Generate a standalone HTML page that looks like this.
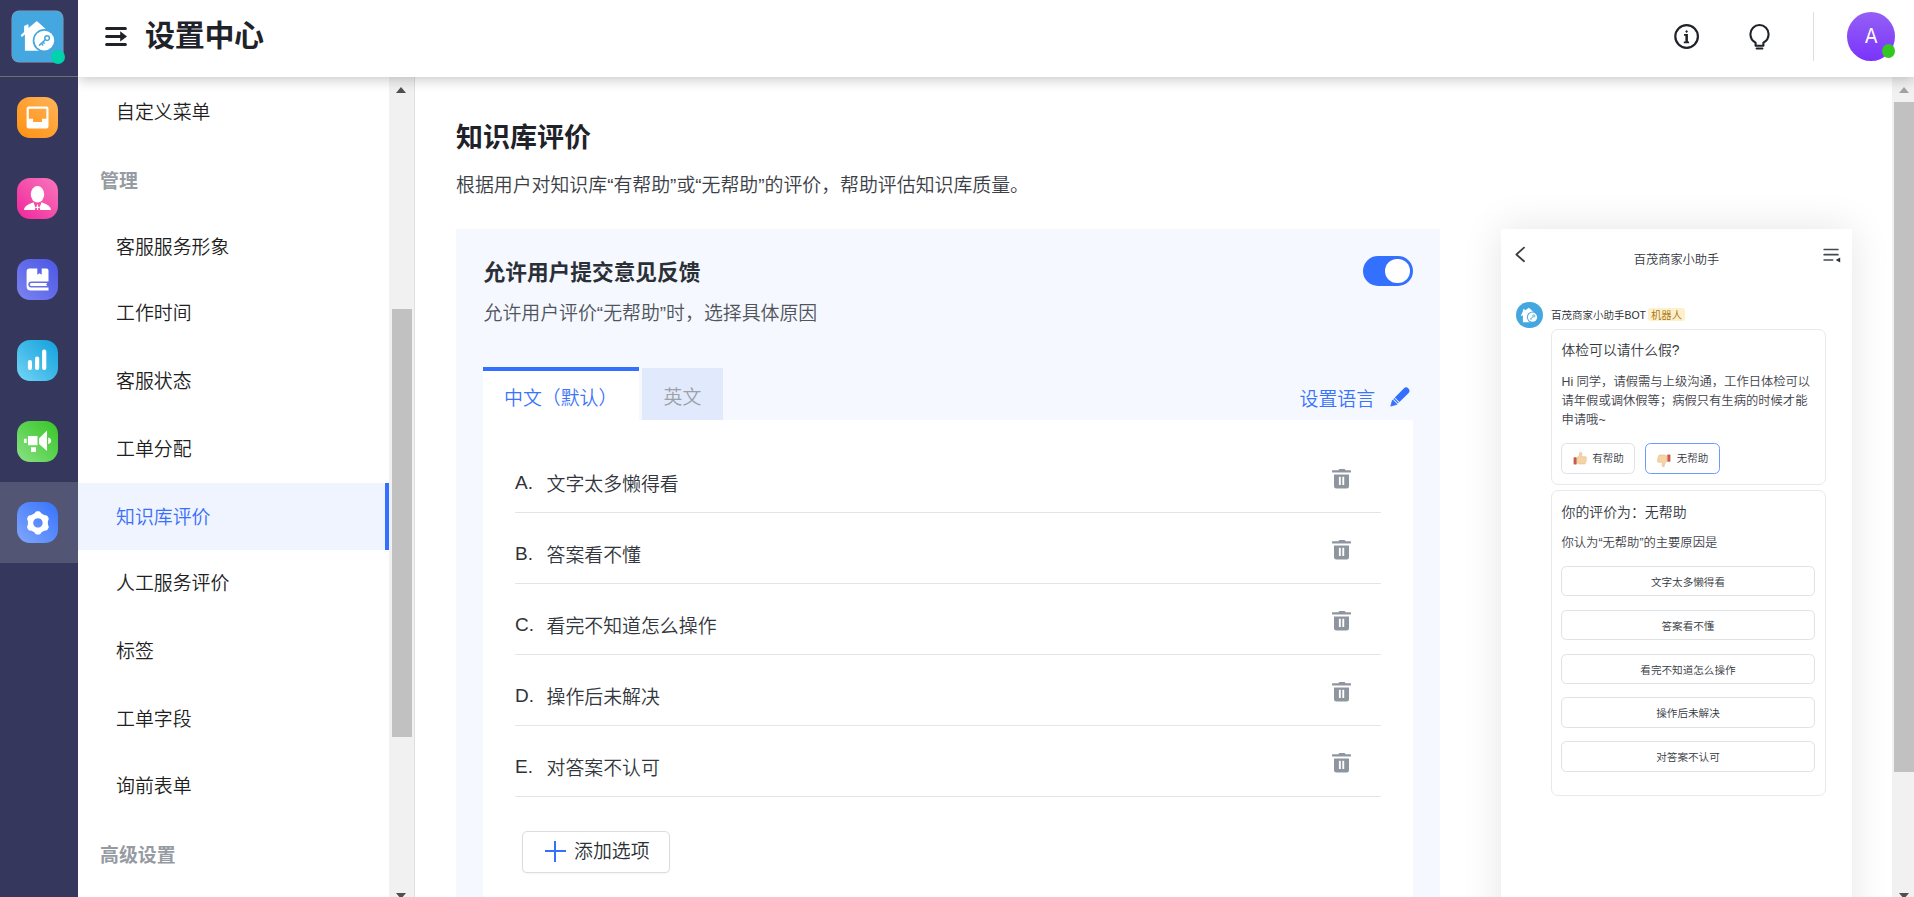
<!DOCTYPE html>
<html lang="zh-CN">
<head>
<meta charset="utf-8">
<title>设置中心</title>
<style>
*{box-sizing:border-box;margin:0;padding:0}
html,body{width:1914px;height:897px;overflow:hidden;background:#fff}
body{position:relative;font-family:"Liberation Sans","Noto Sans CJK SC DemiLight","Noto Sans CJK SC",sans-serif;font-weight:400;color:#1f2329;-webkit-font-smoothing:antialiased}
.abs{position:absolute}
/* left rail */
#rail{position:absolute;left:0;top:0;width:78px;height:897px;background:#35375c;z-index:6}
#rail .line{position:absolute;left:0;top:76px;width:78px;height:1px;background:#70706f}
#rail .act{position:absolute;left:0;top:482px;width:78px;height:81px;background:#525573}
.ico{position:absolute;left:17px;width:41px;height:41.5px;border-radius:13px}
.ico svg{position:absolute;left:0;top:0;width:41px;height:41.5px}
/* header */
#hdr{position:absolute;left:78px;top:0;width:1836px;height:77px;background:#fff;box-shadow:0 3px 12px rgba(0,0,0,.21);z-index:5}
#hdr h1{position:absolute;left:67px;top:15px;font-size:30px;line-height:42px;font-weight:700;color:#1f2329;letter-spacing:-.3px;white-space:nowrap}
/* sub menu */
#menu{position:absolute;left:78px;top:77px;width:311px;height:820px;background:#fff}
.mi{position:absolute;left:0;width:311px;height:67.3px;line-height:67.3px;padding-left:38px;font-size:18.9px;color:#1f1f1f;white-space:nowrap}
.mi.on{background:#f0f4ff;color:#3a6ffb;border-right:4px solid #3370ff}
.mh{position:absolute;left:22px;height:40px;line-height:40px;font-size:18.9px;font-weight:700;color:#969ba3;white-space:nowrap}
.sb{position:absolute;background:#f1f1f1}
.sb .th{position:absolute;background:#c1c1c1}
.tri-u{position:absolute;width:0;height:0;border-left:5.5px solid transparent;border-right:5.5px solid transparent;border-bottom:6px solid #505050}
.tri-d{position:absolute;width:0;height:0;border-left:5.5px solid transparent;border-right:5.5px solid transparent;border-top:6px solid #505050}
/* main */
#main{position:absolute;left:415px;top:77px;width:1477px;height:820px;background:#fff;overflow:hidden}

#main .t1{position:absolute;left:41px;top:41px;font-size:27px;line-height:40px;font-weight:700;color:#1f2329;white-space:nowrap}
#main .t2{position:absolute;left:41px;top:94px;font-size:18.9px;line-height:30px;color:#3b4047;white-space:nowrap}
#card{position:absolute;left:41px;top:152px;width:984px;height:700px;background:#f5f8ff}
#card .h{position:absolute;left:27.5px;top:28px;font-size:21.7px;line-height:32px;font-weight:700;color:#2b2f36;white-space:nowrap}
#card .d{position:absolute;left:27.5px;top:69.5px;font-size:18.9px;line-height:30px;color:#50545b;white-space:nowrap}
#tog{position:absolute;left:907px;top:26.5px;width:50px;height:30.5px;border-radius:16px;background:#3370ff}
#tog i{position:absolute;left:22px;top:3px;width:24.5px;height:24.5px;border-radius:50%;background:#fff}
.tab1{position:absolute;left:27px;top:138px;width:156px;height:54px;background:#fff;border-top:4px solid #3370ff;font-size:18.9px;line-height:55px;color:#3a74fb;white-space:nowrap;padding-left:21px}
.tab2{position:absolute;left:186px;top:139px;width:81px;height:55px;background:#e1e9fd;font-size:18.9px;line-height:59px;color:#9da0a6;text-align:center;white-space:nowrap}
.setl{position:absolute;left:843.5px;top:156px;font-size:18.9px;line-height:30px;color:#3a74fb;white-space:nowrap}
#panel{position:absolute;left:27px;top:191px;width:929.5px;height:520px;background:#fff}
.row{position:absolute;left:31.5px;width:866px;height:71px;border-bottom:1px solid #e3e5e9}
.row .k{position:absolute;left:.5px;top:26px;font-size:19px;line-height:30px;color:#2f3237;white-space:nowrap}
.row .v{position:absolute;left:32px;top:28px;font-size:18.9px;line-height:30px;color:#33373d;white-space:nowrap}
.row svg{position:absolute;left:816px;top:26px}
#addb{position:absolute;left:39px;top:410.5px;width:148px;height:42px;border:1px solid #dadde3;border-radius:5px;background:#fff;box-shadow:0 1px 2px rgba(0,0,0,.05)}
#addb span{position:absolute;left:51px;top:5px;font-size:18.9px;line-height:30px;color:#2b2f36;white-space:nowrap}

#pv{position:absolute;left:1086px;top:151.75px;width:351px;height:720px;background:#fff;box-shadow:0 0 38px rgba(0,0,0,.105)}
#pv .ttl{position:absolute;left:0;top:21.5px;width:351px;text-align:center;font-size:12.2px;line-height:20px;color:#33373d;white-space:nowrap}
#pv .nm{position:absolute;left:49.9px;top:76.2px;font-size:10.5px;line-height:20px;color:#2b2f36;white-space:nowrap}
#pv .tag{position:absolute;left:147.2px;top:79.6px;width:36.6px;height:12.4px;border-radius:2.5px;background:#fdf0cb;color:#a8700c;font-size:10.4px;line-height:15.4px;text-align:center;white-space:nowrap}
.pc{position:absolute;left:49.5px;width:275px;border:1px solid #e8e9eb;border-radius:7px;background:#fff}
.pc .q{position:absolute;left:10px;font-size:13.8px;line-height:20px;color:#33373d;white-space:nowrap}
.pc .b{position:absolute;left:10px;font-size:12.3px;line-height:19.05px;color:#3f434a;white-space:nowrap}
.pb{position:absolute;height:30.4px;border:1px solid #dfe1e5;border-radius:5.5px;background:#fff;font-size:10.5px;line-height:28px;color:#33373d;white-space:nowrap}
.po{position:absolute;left:9.7px;width:253.6px;height:30.6px;border:1px solid #dfe1e5;border-radius:5.5px;background:#fff;font-size:10.6px;line-height:30px;color:#33373d;text-align:center;white-space:nowrap}
#hdr h1,#main .t1,#card .h,.mh{font-family:"Liberation Sans","Noto Sans CJK SC",sans-serif}
</style>
</head>
<body>
<div id="rail">
  <div class="line"></div>
  <div class="act"></div>
  <!-- logo -->
  <div class="abs" style="left:12px;top:11px;width:51px;height:51px;border-radius:7px;background:#44a7df;box-shadow:0 0 0 .5px rgba(255,255,255,.5)">
    <svg width="52" height="52" viewBox="0 0 52 52" style="position:absolute;left:0;top:0">
      <path d="M24.2 10.5a.9.9 0 0 1 1.2 0L33.7 18l-6 4V39.8H13.4a.5.5 0 0 1-.5-.5V23.6l-2.4 1.9a.9.9 0 0 1-1.3-.2l-.2-.3a.9.9 0 0 1 .2-1.2L12.1 21.1V15l3.2-1.6a.8.8 0 0 1 1.2.7v3Z" fill="#fff"/>
      <circle cx="32.3" cy="29.6" r="11.6" fill="#44a7df"/>
      <circle cx="32.3" cy="29.6" r="9.9" fill="#fff"/>
      <circle cx="35.1" cy="27.1" r="2.3" fill="none" stroke="#44a7df" stroke-width="1.5"/>
      <path d="M33.3 28.8 27.5 34.1M29.5 32.5l1.3 1.5M31.1 31l1.1 1.2" stroke="#44a7df" stroke-width="1.5" stroke-linecap="round" fill="none"/>
    </svg>
  </div>
  <div class="abs" style="left:50.5px;top:49.5px;width:14px;height:14px;border-radius:50%;background:#00d2ad"></div>
  <!-- inbox -->
  <div class="ico" style="top:96.7px;background:linear-gradient(225deg,#ffb55c 0%,#ffa133 50%,#ff9212 100%)">
    <svg viewBox="0 0 41 41.5"><path fill-rule="evenodd" fill="#fff" d="M11.6 9.6h17.9a2 2 0 0 1 2 2v17.9a2 2 0 0 1-2 2H11.6a2 2 0 0 1-2-2V11.6a2 2 0 0 1 2-2ZM11.8 11.8v10h4.3v3.1h9V21.8h4.3v-10Z"/></svg>
  </div>
  <!-- person -->
  <div class="ico" style="top:177.7px;background:linear-gradient(225deg,#f877bd 0%,#f44fab 50%,#f2259b 100%)">
    <svg viewBox="0 0 41 41.5"><ellipse cx="20.5" cy="16.3" rx="6.7" ry="8.3" fill="#fff"/><path fill="#fff" d="M7 31.9c.6-3.6 2.6-5 9.5-7.7l1.9 5.3-.5 2.4ZM34 31.9c-.6-3.6-2.6-5-9.5-7.7l-1.9 5.3.5 2.4ZM19.9 26.6h1.2v2.1h1.3v1.2h-1.3v2h-1.2v-2h-1.3v-1.2h1.3Z"/></svg>
  </div>
  <!-- book -->
  <div class="ico" style="top:258.7px;background:linear-gradient(225deg,#4b57e6 0%,#626cea 50%,#7d85ee 100%)">
    <svg viewBox="0 0 41 41.5"><path fill-rule="evenodd" fill="#fff" d="M12.6 9.6H20.3v6.2l2.2-1.6 2.2 1.6V9.6h4.8a2 2 0 0 1 2 2V22.6H14.2a2.9 2.9 0 0 0 0 5.8H31.5v3.1H13.6a4 4 0 0 1-4-4V12.6a3 3 0 0 1 3-3ZM14.4 24H30.3l-1.1 1.5 1.1 1.5H14.4a1.5 1.5 0 0 1 0-3Z"/></svg>
  </div>
  <!-- bars -->
  <div class="ico" style="top:339.7px;background:linear-gradient(225deg,#12a1db 0%,#3fb9e8 50%,#76d6f8 100%)">
    <svg viewBox="0 0 41 41.5"><rect x="10.9" y="19.9" width="4.1" height="10.2" rx="2" fill="#fff"/><rect x="18" y="16.6" width="4.2" height="13.5" rx="2" fill="#fff"/><rect x="25.1" y="9.5" width="4.2" height="20.6" rx="2" fill="#fff"/></svg>
  </div>
  <!-- megaphone -->
  <div class="ico" style="top:420.7px;background:linear-gradient(225deg,#38c528 0%,#5dd352 50%,#8be286 100%)">
    <svg viewBox="0 0 41 41.5"><path fill="#fff" d="M7.3 17.8h2.4v4.2H7.3a.4.4 0 0 1-.4-.4v-3.4a.4.4 0 0 1 .4-.4ZM11 15h9.5v9.3H11ZM14 26.2h5v4.9h-5ZM22 17.4 30 9.6V30.1l-8-7.2ZM31.2 16.5c4 .8 4 5.8 0 6.6Z"/></svg>
  </div>
  <!-- gear -->
  <div class="ico" style="top:501.7px;background:linear-gradient(225deg,#3873fd 0%,#5a8cfc 50%,#82a7fb 100%)">
    <svg viewBox="0 0 41 41.5"><path fill-rule="evenodd" fill="#fff" d="M30.90 20.90 L30.89 20.38 L30.85 19.85 L30.88 19.32 L31.13 18.73 L31.38 18.09 L31.59 17.43 L31.73 16.74 L31.59 16.14 L31.32 15.59 L31.03 15.05 L30.71 14.53 L30.37 14.02 L29.91 13.60 L29.26 13.38 L28.57 13.23 L27.90 13.13 L27.26 13.05 L26.78 12.81 L26.35 12.51 L25.90 12.24 L25.44 11.99 L24.97 11.76 L24.52 11.47 L24.13 10.96 L23.71 10.42 L23.24 9.90 L22.71 9.44 L22.12 9.26 L21.51 9.22 L20.90 9.20 L20.29 9.22 L19.68 9.26 L19.09 9.44 L18.56 9.90 L18.09 10.42 L17.67 10.96 L17.28 11.47 L16.83 11.76 L16.36 11.99 L15.90 12.24 L15.45 12.51 L15.02 12.81 L14.54 13.05 L13.90 13.13 L13.23 13.23 L12.54 13.38 L11.89 13.60 L11.43 14.02 L11.09 14.53 L10.77 15.05 L10.48 15.59 L10.21 16.14 L10.07 16.74 L10.21 17.43 L10.42 18.09 L10.67 18.73 L10.92 19.32 L10.95 19.85 L10.91 20.38 L10.90 20.90 L10.91 21.42 L10.95 21.95 L10.92 22.48 L10.67 23.07 L10.42 23.71 L10.21 24.37 L10.07 25.06 L10.21 25.66 L10.48 26.21 L10.77 26.75 L11.09 27.27 L11.43 27.78 L11.89 28.20 L12.54 28.42 L13.23 28.57 L13.90 28.67 L14.54 28.75 L15.02 28.99 L15.45 29.29 L15.90 29.56 L16.36 29.81 L16.83 30.04 L17.28 30.33 L17.67 30.84 L18.09 31.38 L18.56 31.90 L19.09 32.36 L19.68 32.54 L20.29 32.58 L20.90 32.60 L21.51 32.58 L22.12 32.54 L22.71 32.36 L23.24 31.90 L23.71 31.38 L24.13 30.84 L24.52 30.33 L24.97 30.04 L25.44 29.81 L25.90 29.56 L26.35 29.29 L26.78 28.99 L27.26 28.75 L27.90 28.67 L28.57 28.57 L29.26 28.42 L29.91 28.20 L30.37 27.78 L30.71 27.27 L31.03 26.75 L31.32 26.21 L31.59 25.66 L31.73 25.06 L31.59 24.37 L31.38 23.71 L31.13 23.07 L30.88 22.48 L30.85 21.95 L30.89 21.42Z M20.9 16.2a4.7 4.7 0 1 0 .01 0Z"/></svg>
  </div>
</div>
<div id="hdr">
  <svg class="abs" style="left:26px;top:24px" width="24" height="26" viewBox="0 0 24 26"><path d="M2.6 4.4H21.4M2.6 12.4H17M2.6 20.6H21.4" stroke="#1f2329" stroke-width="3" stroke-linecap="round" fill="none"/><path d="M16.2 7.3 23 12.4 16.2 17.5Z" fill="#1f2329"/></svg>
  <h1>设置中心</h1>
  <svg class="abs" style="left:1594px;top:22px" width="30" height="30" viewBox="0 0 30 30"><circle cx="14.6" cy="14.5" r="11.3" fill="none" stroke="#1f2329" stroke-width="2.2"/><path d="M14.6 7.9 16 9.4 14.6 10.9 13.2 9.4Z" fill="#1f2329"/><path d="M12 12h3.9v7.5h1.2v1.8H11.8v-1.8h1.6v-5.7H12Z" fill="#1f2329"/></svg>
  <svg class="abs" style="left:1667px;top:22px" width="30" height="30" viewBox="0 0 30 30"><path d="M10.6 23.7H18.4V20.6C21.6 19.1 23.6 16 23.6 12.1A9.1 9.1 0 0 0 5.4 12.1C5.4 16 7.4 19.1 10.6 20.6Z" fill="none" stroke="#1f2329" stroke-width="2.1" stroke-linejoin="round"/><path d="M11.6 26.4H17.4" stroke="#1f2329" stroke-width="2" stroke-linecap="round"/></svg>
  <div class="abs" style="left:1735px;top:12px;width:1px;height:49px;background:#dcdde0"></div>
  <div class="abs" style="left:1769px;top:12px;width:48px;height:49px;border-radius:50%;background:linear-gradient(180deg,#9460f5 0%,#7a33fb 100%);color:#fff;font-size:21.5px;line-height:48.5px;text-align:center"><span style="display:inline-block;transform:scaleX(.86)">A</span></div>
  <div class="abs" style="left:1804px;top:44px;width:13px;height:14px;border-radius:50%;background:#34c724"></div>
</div>
<div id="menu">
  <div class="mi" style="top:1.8px">自定义菜单</div>
  <div class="mi" style="top:136.7px">客服服务形象</div>
  <div class="mi" style="top:203.4px">工作时间</div>
  <div class="mi" style="top:270.8px">客服状态</div>
  <div class="mi" style="top:338.8px">工单分配</div>
  <div class="mi on" style="top:405.7px;line-height:70px">知识库评价</div>
  <div class="mi" style="top:473px">人工服务评价</div>
  <div class="mi" style="top:541.0px">标签</div>
  <div class="mi" style="top:608.8px">工单字段</div>
  <div class="mi" style="top:675.8px">询前表单</div>
  <div class="mh" style="top:84.9px">管理</div>
  <div class="mh" style="top:759.3px">高级设置</div>
</div>
<div class="sb" style="left:389px;top:77px;width:26px;height:820px;border-right:1px solid #dddfe5"><div class="tri-u" style="left:7px;top:10px"></div><div class="th" style="left:2.5px;top:232px;width:20px;height:428px"></div><div class="tri-d" style="left:7px;top:816px"></div></div>
<div class="sb" style="left:1892px;top:77px;width:22px;height:820px;z-index:3"><div class="tri-u" style="left:7px;top:10px;border-bottom-color:#a3a3a3"></div><div class="th" style="left:2px;top:25px;width:20px;height:670px"></div><div class="tri-d" style="left:7px;top:816px"></div></div>
<div id="main">
  <div class="t1">知识库评价</div>
  <div class="t2">根据用户对知识库“有帮助”或“无帮助”的评价，帮助评估知识库质量。</div>
  <div id="pv">
    <svg class="abs" style="left:10px;top:13.6px" width="24" height="26" viewBox="0 0 24 26"><path d="M13 5.7 5.4 12.5 13 19.2" fill="none" stroke="#3a3f48" stroke-width="1.8" stroke-linecap="round" stroke-linejoin="round"/></svg>
    <div class="ttl">百茂商家小助手</div>
    <svg class="abs" style="left:318px;top:14px" width="26" height="26" viewBox="0 0 26 26"><path d="M5.2 6.5H18.9M5.2 11.7H18.9M5.2 17H13.6" fill="none" stroke="#434852" stroke-width="1.7" stroke-linecap="round"/><path d="M16.7 17 21.2 14.5V19.5Z" fill="#2b2f36"/></svg>
    <div class="abs" style="left:15px;top:72.8px;width:26.7px;height:26.7px;border-radius:50%;background:#44a7df">
      <svg width="26.7" height="26.7" viewBox="0 0 52 52" style="position:absolute;left:0;top:0"><g transform="translate(1.5 1.5) scale(.94)"><path d="M12.7 17.5V14.6l2.2-1.6 2 1.5v1.6L24.4 10.6a1 1 0 0 1 1.3 0L36 20.3l-8 3.5V40.2H13.4a.7.7 0 0 1-.7-.7V26l-2.2 1.4a.9.9 0 0 1-1.2-.3l-.3-.5a.9.9 0 0 1 .2-1.2Z" fill="#fff"/><circle cx="32.6" cy="29.9" r="11.6" fill="#44a7df"/><circle cx="32.6" cy="29.9" r="9.6" fill="#fff"/><circle cx="35.4" cy="27.3" r="2.3" fill="none" stroke="#44a7df" stroke-width="1.7"/><path d="M33.6 29 27.6 34.4M29.6 32.8l1.3 1.5" stroke="#44a7df" stroke-width="1.7" stroke-linecap="round" fill="none"/></g></svg>
    </div>
    <div class="nm">百茂商家小助手BOT</div>
    <div class="tag">机器人</div>
    <div class="pc" style="top:100.4px;height:156px">
      <div class="q" style="top:11.3px">体检可以请什么假?</div>
      <div class="b" style="top:43px">Hi 同学，请假需与上级沟通，工作日体检可以<br>请年假或调休假等；病假只有生病的时候才能<br>申请哦~</div>
      <div class="pb" style="left:9.8px;top:113.2px;width:73.5px"><svg class="abs" style="left:11px;top:6.5px" width="16" height="16" viewBox="0 0 16 16"><rect x=".6" y="6.2" width="3.1" height="7.2" rx=".6" fill="#c85a4c"/><path d="M4.2 6.4C6 5.6 6.6 3.7 6.7 1.8c.1-.9 2.1-.7 2.2 1 0 1.1-.3 2-.6 2.9h4.1c1.3 0 1.6 1.6.6 2 .8.5.6 1.7-.2 1.9.6.6.3 1.6-.5 1.8.4.7 0 1.6-.9 1.6H7.2c-1.2 0-2-.4-3-.9Z" fill="#f6d3a5" stroke="#e3b27a" stroke-width=".5"/></svg><span class="abs" style="left:30px;top:0">有帮助</span></div>
      <div class="pb" style="left:93.8px;top:113.2px;width:74.8px;border-color:#6f98ff"><svg class="abs" style="left:9px;top:8.5px" width="16" height="16" viewBox="0 0 16 16"><g transform="translate(16 15) scale(-1 -1)"><rect x=".6" y="6.2" width="3.1" height="7.2" rx=".6" fill="#c85a4c"/><path d="M4.2 6.4C6 5.6 6.6 3.7 6.7 1.8c.1-.9 2.1-.7 2.2 1 0 1.1-.3 2-.6 2.9h4.1c1.3 0 1.6 1.6.6 2 .8.5.6 1.7-.2 1.9.6.6.3 1.6-.5 1.8.4.7 0 1.6-.9 1.6H7.2c-1.2 0-2-.4-3-.9Z" fill="#f6d3a5" stroke="#e3b27a" stroke-width=".5"/></g></svg><span class="abs" style="left:30.5px;top:0">无帮助</span></div>
    </div>
    <div class="pc" style="top:261px;height:306.5px">
      <div class="q" style="top:11.1px;font-size:13.9px">你的评价为：无帮助</div>
      <div class="b" style="top:43px">你认为“无帮助”的主要原因是</div>
      <div class="po" style="top:74.85px">文字太多懒得看</div>
      <div class="po" style="top:118.80px">答案看不懂</div>
      <div class="po" style="top:162.75px">看完不知道怎么操作</div>
      <div class="po" style="top:206.70px">操作后未解决</div>
      <div class="po" style="top:250.65px">对答案不认可</div>
    </div>
  </div>
  <div id="card">
    <div class="h">允许用户提交意见反馈</div>
    <div class="d">允许用户评价“无帮助”时，选择具体原因</div>
    <div id="tog"><i></i></div>
    <div class="tab1">中文（默认）</div>
    <div class="tab2">英文</div>
    <div class="setl">设置语言</div>
    <svg class="abs" style="left:934px;top:158px" width="20" height="20" viewBox="0 0 20 20"><g transform="translate(.6 19.3) rotate(-45)" fill="#3370ff"><path d="M.3 0 5.9-3.1V3.1Z" stroke="#3370ff" stroke-width=".8" stroke-linejoin="round"/><rect x="7.1" y="-3.3" width="1.3" height="6.6"/><path d="M9.3-3.3H21.9a3.3 3.3 0 0 1 0 6.6H9.3Z"/></g></svg>
    <div id="panel">
      <div class="row" style="top:22px"><span class="k">A.</span><span class="v">文字太多懒得看</span><svg width="22" height="22" viewBox="0 0 22 22"><path fill="#8f959e" d="M7.5 2.3A1.5 1.5 0 0 1 9 .9h4a1.5 1.5 0 0 1 1.5 1.4H19.6a.4.4 0 0 1 .4.4V4.1a.4.4 0 0 1-.4.4H1.4A.4.4 0 0 1 1 4.1V2.7a.4.4 0 0 1 .4-.4ZM3 6.5H18V18a2.5 2.5 0 0 1-2.5 2.5H5.5A2.5 2.5 0 0 1 3 18Z"/><rect x="7.9" y="8.8" width="1.9" height="8.2" fill="#fff"/><rect x="11.3" y="8.8" width="1.9" height="8.2" fill="#fff"/></svg></div>
      <div class="row" style="top:93px"><span class="k">B.</span><span class="v">答案看不懂</span><svg width="22" height="22" viewBox="0 0 22 22"><path fill="#8f959e" d="M7.5 2.3A1.5 1.5 0 0 1 9 .9h4a1.5 1.5 0 0 1 1.5 1.4H19.6a.4.4 0 0 1 .4.4V4.1a.4.4 0 0 1-.4.4H1.4A.4.4 0 0 1 1 4.1V2.7a.4.4 0 0 1 .4-.4ZM3 6.5H18V18a2.5 2.5 0 0 1-2.5 2.5H5.5A2.5 2.5 0 0 1 3 18Z"/><rect x="7.9" y="8.8" width="1.9" height="8.2" fill="#fff"/><rect x="11.3" y="8.8" width="1.9" height="8.2" fill="#fff"/></svg></div>
      <div class="row" style="top:164px"><span class="k">C.</span><span class="v">看完不知道怎么操作</span><svg width="22" height="22" viewBox="0 0 22 22"><path fill="#8f959e" d="M7.5 2.3A1.5 1.5 0 0 1 9 .9h4a1.5 1.5 0 0 1 1.5 1.4H19.6a.4.4 0 0 1 .4.4V4.1a.4.4 0 0 1-.4.4H1.4A.4.4 0 0 1 1 4.1V2.7a.4.4 0 0 1 .4-.4ZM3 6.5H18V18a2.5 2.5 0 0 1-2.5 2.5H5.5A2.5 2.5 0 0 1 3 18Z"/><rect x="7.9" y="8.8" width="1.9" height="8.2" fill="#fff"/><rect x="11.3" y="8.8" width="1.9" height="8.2" fill="#fff"/></svg></div>
      <div class="row" style="top:235px"><span class="k">D.</span><span class="v">操作后未解决</span><svg width="22" height="22" viewBox="0 0 22 22"><path fill="#8f959e" d="M7.5 2.3A1.5 1.5 0 0 1 9 .9h4a1.5 1.5 0 0 1 1.5 1.4H19.6a.4.4 0 0 1 .4.4V4.1a.4.4 0 0 1-.4.4H1.4A.4.4 0 0 1 1 4.1V2.7a.4.4 0 0 1 .4-.4ZM3 6.5H18V18a2.5 2.5 0 0 1-2.5 2.5H5.5A2.5 2.5 0 0 1 3 18Z"/><rect x="7.9" y="8.8" width="1.9" height="8.2" fill="#fff"/><rect x="11.3" y="8.8" width="1.9" height="8.2" fill="#fff"/></svg></div>
      <div class="row" style="top:306px"><span class="k">E.</span><span class="v">对答案不认可</span><svg width="22" height="22" viewBox="0 0 22 22"><path fill="#8f959e" d="M7.5 2.3A1.5 1.5 0 0 1 9 .9h4a1.5 1.5 0 0 1 1.5 1.4H19.6a.4.4 0 0 1 .4.4V4.1a.4.4 0 0 1-.4.4H1.4A.4.4 0 0 1 1 4.1V2.7a.4.4 0 0 1 .4-.4ZM3 6.5H18V18a2.5 2.5 0 0 1-2.5 2.5H5.5A2.5 2.5 0 0 1 3 18Z"/><rect x="7.9" y="8.8" width="1.9" height="8.2" fill="#fff"/><rect x="11.3" y="8.8" width="1.9" height="8.2" fill="#fff"/></svg></div>
      <div id="addb"><i class="abs" style="left:21.5px;top:18.5px;width:21px;height:2px;background:#3370ff"></i><i class="abs" style="left:31px;top:9px;width:2px;height:21px;background:#3370ff"></i><span>添加选项</span></div>
    </div>
  </div>
</div>
</body>
</html>
